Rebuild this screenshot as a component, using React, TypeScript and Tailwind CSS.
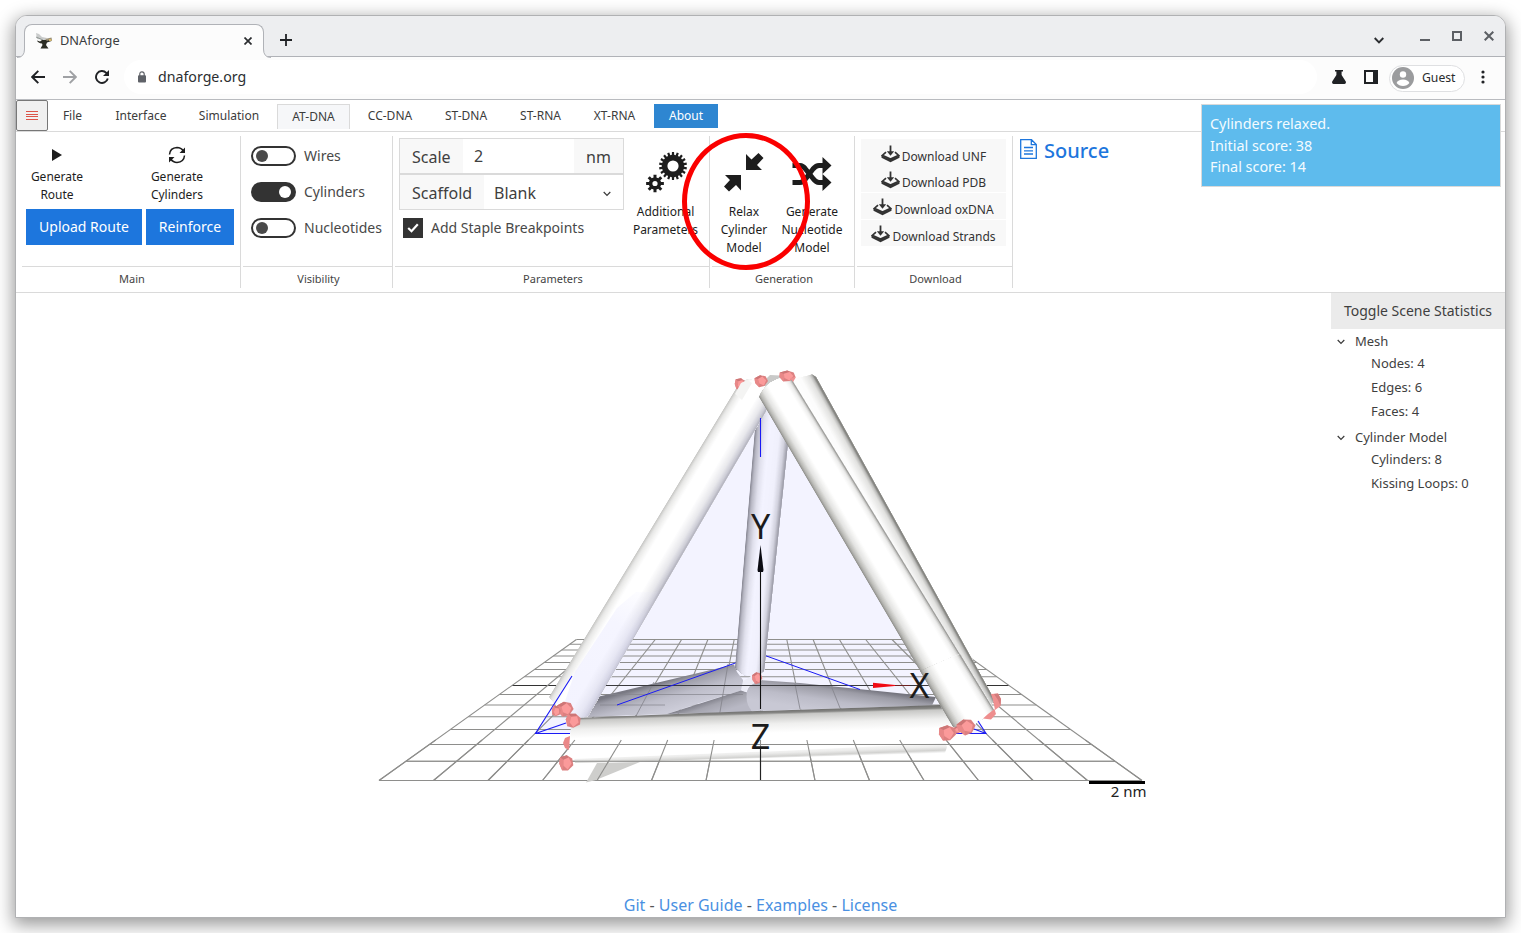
import React from "react";

type Pt = [number, number];

const CX = 760.5;
const ROWS = [639.5, 644.3, 650, 656, 662.5, 669.5, 676.7, 685.5, 694.5, 705, 716.7, 729.5, 744.5, 761.3, 780.5];
const halfWidth = (y: number) => 381.5 * ((y - 508) / 272.5);
const COLS = Array.from({ length: 15 }, (_, i) => (i - 7) / 7);

function gearPath(cx: number, cy: number, rOut: number, rIn: number, teeth: number, hole: number) {
  const pts: string[] = [];
  const step = (Math.PI * 2) / teeth;
  for (let i = 0; i < teeth; i++) {
    const a = i * step - Math.PI / 2;
    const spec: Pt[] = [
      [-0.3, rIn],
      [-0.22, rOut],
      [0.22, rOut],
      [0.3, rIn],
    ];
    spec.forEach(([o, r]) => {
      pts.push(`${(cx + r * Math.cos(a + o * step)).toFixed(2)} ${(cy + r * Math.sin(a + o * step)).toFixed(2)}`);
    });
  }
  return `M${pts.join("L")}Z M${cx + hole} ${cy}A${hole} ${hole} 0 1 0 ${cx - hole} ${cy}A${hole} ${hole} 0 1 0 ${cx + hole} ${cy}Z`;
}

type Stop = [number, number, number, number];

function ramp(stops: Stop[], t: number) {
  let i = 0;
  while (i < stops.length - 2 && t > stops[i + 1][0]) i++;
  const a = stops[i];
  const b = stops[i + 1];
  const k = Math.min(1, Math.max(0, (t - a[0]) / (b[0] - a[0])));
  const mix = (n: number) => Math.round(a[n] + (b[n] - a[n]) * k);
  return `rgb(${mix(1)},${mix(2)},${mix(3)})`;
}

/* A tapered cylinder: shading strips run between the two silhouette edges, cut to the outline. */
function Cylinder({ id, a, b, outline, stops }: { id: string; a: [Pt, Pt]; b: [Pt, Pt]; outline: string; stops: Stop[] }) {
  const N = 36;
  const at = (edge: [Pt, Pt], s: number): Pt => [edge[0][0] + (edge[1][0] - edge[0][0]) * s, edge[0][1] + (edge[1][1] - edge[0][1]) * s];
  const lerp = (p: Pt, q: Pt, t: number) => `${(p[0] + (q[0] - p[0]) * t).toFixed(2)},${(p[1] + (q[1] - p[1]) * t).toFixed(2)}`;
  const top: [Pt, Pt] = [at(a, -0.15), at(b, -0.15)];
  const bottom: [Pt, Pt] = [at(a, 1.15), at(b, 1.15)];
  return (
    <g clipPath={`url(#${id})`}>
      <clipPath id={id}>
        <path d={outline} />
      </clipPath>
      <path d={outline} fill={ramp(stops, 0)} />
      {Array.from({ length: N }, (_, i) => {
        const t = i / N;
        return (
          <polygon
            key={i}
            points={`${lerp(top[0], top[1], t)} ${lerp(top[0], top[1], 1.2)} ${lerp(bottom[0], bottom[1], 1.2)} ${lerp(bottom[0], bottom[1], t)}`}
            fill={ramp(stops, t + 0.5 / N)}
          />
        );
      })}
    </g>
  );
}

const LEFT_STOPS: Stop[] = [
  [0, 196, 196, 194],
  [0.08, 232, 232, 231],
  [0.25, 255, 255, 255],
  [0.6, 255, 255, 255],
  [0.82, 232, 232, 236],
  [0.93, 206, 206, 215],
  [1, 176, 176, 188],
];
const RIGHT_STOPS: Stop[] = [
  [0, 140, 140, 136],
  [0.06, 184, 184, 180],
  [0.18, 228, 228, 226],
  [0.36, 255, 255, 255],
  [0.8, 255, 255, 255],
  [0.92, 236, 236, 235],
  [0.97, 190, 190, 188],
  [1, 130, 130, 126],
];
const FAR_STOPS: Stop[] = [
  [0, 255, 255, 255],
  [0.6, 252, 252, 252],
  [0.85, 226, 226, 224],
  [0.93, 190, 190, 188],
  [1, 120, 120, 116],
];
const MID_STOPS: Stop[] = [
  [0, 132, 132, 144],
  [0.08, 184, 184, 196],
  [0.25, 226, 226, 238],
  [0.42, 243, 243, 255],
  [0.72, 240, 240, 252],
  [0.88, 210, 210, 222],
  [1, 152, 152, 164],
];

/* Low-poly sphere joint, drawn as an uneven polygon with one bright facet. */
function Joint({ x, y, r, ry = r, rot = 0 }: { x: number; y: number; r: number; ry?: number; rot?: number }) {
  const point = (deg: number, k: number) => {
    const a = ((deg + rot) * Math.PI) / 180;
    return `${(x + r * k * Math.cos(a)).toFixed(2)},${(y + ry * k * Math.sin(a)).toFixed(2)}`;
  };
  const outer = [point(0, 1.08), point(58, 0.98), point(105, 1.08), point(160, 0.96), point(205, 1.1), point(262, 0.98), point(312, 1.06)];
  const facet = [point(-10, 0.8), point(58, 0.86), point(120, 0.5), point(215, 0.55), point(285, 0.78)];
  return (
    <g>
      <polygon points={outer.join(" ")} fill="#dc8080" />
      <polygon points={[point(105, 1.08), point(160, 0.96), point(205, 1.1), point(215, 0.55), point(120, 0.5)].join(" ")} fill="#e88888" />
      <polygon points={[point(205, 1.1), point(262, 0.98), point(285, 0.78), point(215, 0.55)].join(" ")} fill="#cd7676" />
      <polygon points={facet.join(" ")} fill="#fb9a9a" />
    </g>
  );
}

function Scene() {
  return (
    <svg className="block h-full w-full" viewBox="16 293 1489 624" preserveAspectRatio="none">
      <defs>
        <linearGradient id="front" gradientUnits="userSpaceOnUse" x1="760" y1="710.5" x2="761.3" y2="756">
          <stop offset="0" stopColor="#6d6d6b" />
          <stop offset="0.06" stopColor="#868684" />
          <stop offset="0.1" stopColor="#c8c8c6" />
          <stop offset="0.3" stopColor="#efefee" />
          <stop offset="0.5" stopColor="#ffffff" />
          <stop offset="1" stopColor="#ffffff" />
        </linearGradient>
        <linearGradient id="under" gradientUnits="userSpaceOnUse" x1="760" y1="748" x2="760.4" y2="759">
          <stop offset="0" stopColor="#ffffff" />
          <stop offset="0.5" stopColor="#ececeb" />
          <stop offset="0.8" stopColor="#d2d2d0" />
          <stop offset="1" stopColor="#f4f4f4" />
        </linearGradient>
        <linearGradient id="baseLeft" gradientUnits="userSpaceOnUse" x1="665" y1="681" x2="674" y2="713">
          <stop offset="0" stopColor="#797983" />
          <stop offset="0.14" stopColor="#9a9aa5" />
          <stop offset="0.5" stopColor="#bdbdc9" />
          <stop offset="1" stopColor="#cfcfdb" />
        </linearGradient>
        <linearGradient id="baseRight" gradientUnits="userSpaceOnUse" x1="850" y1="687" x2="846" y2="714">
          <stop offset="0" stopColor="#767680" />
          <stop offset="0.2" stopColor="#9c9ca6" />
          <stop offset="0.6" stopColor="#bcbcc8" />
          <stop offset="1" stopColor="#c8c8d4" />
        </linearGradient>
        <linearGradient id="baseInner" gradientUnits="userSpaceOnUse" x1="705" y1="701" x2="710" y2="716">
          <stop offset="0" stopColor="#7e7e88" />
          <stop offset="0.4" stopColor="#a4a4ae" />
          <stop offset="1" stopColor="#b8b8c4" />
        </linearGradient>
        <linearGradient id="tint" gradientUnits="userSpaceOnUse" x1="650" y1="580" x2="585" y2="700">
          <stop offset="0" stopColor="#e6e6ff" stopOpacity="0" />
          <stop offset="0.4" stopColor="#e6e6ff" stopOpacity="0.4" />
          <stop offset="1" stopColor="#e6e6ff" stopOpacity="0.45" />
        </linearGradient>
      </defs>

      <polygon points="760,386 535,733.5 986,733.5" fill="#f3f3ff" />

      {/* ground grid */}
      <g stroke="#8e8e8c" strokeWidth="1.1">
        {ROWS.map((y) => (
          <line key={y} x1={CX - halfWidth(y)} x2={CX + halfWidth(y)} y1={y} y2={y} stroke={y === 685.5 ? "#333333" : undefined} />
        ))}
        {COLS.map((c) => (
          <line key={c} x1={CX + c * halfWidth(639.5)} y1={639.5} x2={CX + c * halfWidth(780.5)} y2={780.5} />
        ))}
      </g>

      {/* base cylinders */}
      <polygon points="584,700 597,697 734,664.5 737,672 743,680 743,690 700,703 667,714 584,717" fill="url(#baseLeft)" />
      <polygon points="667,714 741,690.5 749,693 752,712" fill="url(#baseInner)" />
      <path d="M760 680 L800 683 L936 697 L932 705.5 L752 711 Q745 704 747 691 Q749 684 760 680Z" fill="url(#baseRight)" />
      <polygon points="743,681 757,673 765,679 757,682 749,686 746,692 741,690" fill="#ececf6" />
      <g stroke="#84848c" strokeWidth="1">
        <line x1="606" x2="743" y1="694.5" y2="694.5" opacity="0.7" />
        <line x1="600" x2="665" y1="705" y2="705" opacity="0.7" />
        <line x1="654" x2="636" y1="682" y2="716" opacity="0.8" />
        <line x1="728" x2="720" y1="664" y2="712" opacity="0.8" />
        <line x1="795" x2="800" y1="684" y2="709" opacity="0.8" />
        <line x1="832" x2="840" y1="688" y2="708" opacity="0.8" />
        <line x1="600" x2="935" y1="685.5" y2="685.5" stroke="#3a3a3e" />
      </g>

      {/* mesh edges */}
      <g stroke="#1a1af5" strokeWidth="1" fill="none">
        <line x1="617" y1="705" x2="741" y2="661" />
        <line x1="765" y1="655.5" x2="860" y2="689.5" />
      </g>

      {/* far cylinders */}
      <polygon points="761,384 770,375 790,376 796,386 780,394" fill="#c9c9c8" />
      <Cylinder
        id="far"
        a={[[785, 390], [965, 715]]}
        b={[[815, 377], [993.5, 699]]}
        outline="M791 380 L797 378 L807 376 L812 374.5 L816 377 L994 699 L990 708 L975 690Z"
        stops={FAR_STOPS}
      />
      <Cylinder
        id="mid"
        a={[[755, 428], [735, 668]]}
        b={[[787.5, 447], [764, 671]]}
        outline="M756 402 L768 396 L788 440 L787.5 447 L764 671 L756 677 L744 675 L735 668 L755 428Z"
        stops={MID_STOPS}
      />
      <Joint x={757} y={678} r={5} ry={6} />

      {/* left cylinder */}
      <Cylinder
        id="left"
        a={[[740, 382], [549, 697]]}
        b={[[766, 411], [588, 716]]}
        outline="M740 382 L749 379 L760 383 L768 396 L766 411 L588 716 L576 719 L560 709 L549 697Z"
        stops={LEFT_STOPS}
      />
      <polygon points="660,592 636,592 617,608 575,672 562,710 578,719 588,716" fill="url(#tint)" />

      <Joint x={740} y={384} r={5.5} ry={6} rot={20} />
      <polygon points="741,383 747,380 752,383 742,400 735,394" fill="#f4f4f3" />
      <Joint x={761} y={381} r={6.5} ry={6} />
      <Cylinder
        id="near"
        a={[[759, 397], [953, 727]]}
        b={[[792, 380], [994, 710]]}
        outline="M759 397 Q763 388 770 383 L778 379 L786 378 L792 380 L994 710 L987 716 L973 725 L953 727Z"
        stops={RIGHT_STOPS}
      />
      <Joint x={787} y={376} r={8} ry={5.5} rot={10} />
      <polygon points="790,378 796,377 793,382" fill="#ee9090" />

      {/* front cylinder */}
      <polygon points="597,763 640,762 596,780 586,782.5" fill="#cececc" />
      <polygon points="573,750 945,742 947,747 945,752.7 780,757.5 575,763" fill="url(#under)" />
      <path d="M578 718 L700 713 L940 705 L954 728 L945 743 L780 751 L574 759 L570 745 L571 724Z" fill="url(#front)" />
      <Cylinder
        id="nearFoot"
        a={[[759, 397], [953, 727]]}
        b={[[792, 380], [994, 710]]}
        outline="M920 671 L953 727 L973 725 L987 716 L994 710 L960 654Z"
        stops={RIGHT_STOPS}
      />

      {/* grid lines in front of the cylinders */}
      <g stroke="#8e8e8c" strokeWidth="1.1">
        <line x1="430" x2="1092" y1="744.5" y2="744.5" />
        <line x1="407" x2="1115" y1="761.3" y2="761.3" />
        {COLS.map((c) => (
          <line key={c} x1={CX + c * halfWidth(740)} y1={740} x2={CX + c * halfWidth(780.5)} y2={780.5} />
        ))}
      </g>

      <g stroke="#1a1af5" strokeWidth="1.1" fill="none">
        <path d="M572 676 L535.5 733.5 L570 733.5 M535.5 733.5 L566 723" />
        <path d="M956 733.5 L986 733.5 L978 721 M974 729 L986 733.5" />
        <line x1="760.5" x2="760.5" y1="418" y2="457" />
      </g>

      <Joint x={565} y={709} r={8} ry={7.5} />
      <Joint x={556} y={711} r={4.5} ry={5.5} rot={40} />
      <Joint x={573} y={720.5} r={7.5} ry={7.5} rot={30} />
      <path d="M570 736 L565 738 L563 743 L565 748 L569 750Z" fill="#ea8888" />
      <Joint x={566} y={763} r={7} ry={8} rot={15} />
      <path d="M991 694 L998 693.5 L1001 699 L1000.5 706 L995 710 L993 700Z" fill="#f09090" />
      <path d="M994 694 L998 693.5 L1001 699 L1000.5 706 L998 700Z" fill="#d27c7c" />
      <path d="M994.5 709 L996 714 L991 719.5 L983 718.5 L988 714Z" fill="#ee8e8e" />
      <Joint x={957} y={730} r={4} ry={3.5} />
      <Joint x={947} y={733} r={8.5} ry={8} rot={10} />
      <Joint x={966} y={727} r={9} ry={8} rot={-10} />

      {/* axes */}
      <line x1="760.5" x2="760.5" y1="570" y2="709" stroke="#111" strokeWidth="1.1" />
      <line x1="760.5" x2="760.5" y1="749" y2="780" stroke="#222" strokeWidth="1.1" />
      <polygon points="760.5,545 763.5,570 763,572 758,572 757.5,570" fill="#0b0b12" />
      <polygon points="900,685.5 873,682.8 873,688" fill="#f00a14" />
      <line x1="895" x2="910" y1="685.5" y2="685.5" stroke="#6b2222" strokeWidth="1" />
      <g fontFamily="Noto Sans, sans-serif" fontSize="34" fill="#1c1c1c" textAnchor="middle">
        <text x="760.5" y="539">Y</text>
        <text x="919.5" y="698">X</text>
        <text x="760.5" y="749">Z</text>
      </g>
      <rect x="1089" y="781" width="56" height="3" fill="#000" />
      <text x="1146.5" y="797" textAnchor="end" fontFamily="Noto Sans, sans-serif" fontSize="15" fill="#222">
        2 nm
      </text>
    </svg>
  );
}

function Group({ title, className, children }: { title: string; className: string; children?: React.ReactNode }) {
  return (
    <div className={`flex h-[152px] shrink-0 flex-col border-r border-[#dadada] ${className}`}>
      <div className="h-[130px]">{children}</div>
      <div className="h-[22px] border-t border-[#dadada] pl-[2px] pt-[4px] text-center text-[11px] leading-[16px] text-[#444]">{title}</div>
    </div>
  );
}

function ToolButton({ icon, lines, className }: { icon: React.ReactNode; lines: string[]; className: string }) {
  return (
    <button className={`flex flex-col items-center text-[12px] leading-[18px] text-[#1d1d1d] ${className}`}>
      {icon}
      {lines.map((l) => (
        <span key={l} className="whitespace-nowrap">{l}</span>
      ))}
    </button>
  );
}

function Switch({ on, label }: { on?: boolean; label: string }) {
  return (
    <label className="flex h-9 items-center gap-2">
      <span className={on ? "flex h-5 w-[45px] items-center justify-end rounded-full bg-[#333] px-[5px]" : "flex h-5 w-[45px] items-center rounded-full border-2 border-[#333] bg-white px-[3px]"}>
        <span className={on ? "h-3 w-3 rounded-full bg-white" : "h-3 w-3 rounded-full bg-[#4a4a4a]"} />
      </span>
      <span className="pb-[2px] text-[14px] text-[#484848]">{label}</span>
    </label>
  );
}

function DownloadIcon() {
  return (
    <svg width="19" height="18" viewBox="0 0 19 18" fill="none" stroke="#333">
      <path d="M9.5 0.5V9" strokeWidth="1.8" />
      <path d="M5.8 6.2L9.5 10.8L13.2 6.2Z" fill="#333" stroke="none" />
      <path d="M5 7.2L1.3 10.4L9.5 14L17.7 10.4L14 7.2" strokeWidth="1.7" />
      <path d="M0.5 10.5L9.5 14.3L18.5 10.5V12.8L9.5 17.2L0.5 12.8Z" fill="#333" stroke="none" />
    </svg>
  );
}

function Chevron({ className }: { className: string }) {
  return (
    <svg className={className} width="8" height="6" viewBox="0 0 8 6" fill="none" stroke="#3a3a3a" strokeWidth="1.2">
      <path d="M0.7 1L4 4.5L7.3 1" />
    </svg>
  );
}

const TABS: [string, string][] = [
  ["File", "w-[49px]"],
  ["Interface", "w-[80px]"],
  ["Simulation", "w-[88px]"],
  ["AT-DNA", "w-[73px] h-[25px] border border-b-0 border-[#dadada] bg-[#f6f7f9]"],
  ["CC-DNA", "w-[72px]"],
  ["ST-DNA", "w-[72px]"],
  ["ST-RNA", "w-[69px]"],
  ["XT-RNA", "w-[71px]"],
  ["About", "w-[64px] bg-[#2e86d1] text-white"],
];

const DOWNLOADS: [string, string][] = [
  ["Download UNF", "h-[27px] pt-px"],
  ["Download PDB", "h-[26px]"],
  ["Download oxDNA", "mt-px h-[26px]"],
  ["Download Strands", "mt-px h-[26px]"],
];

const GEARS = gearPath(28, 14, 14, 11.2, 18, 5.6) + gearPath(10, 31.5, 9, 6.2, 8, 2.6);

export default function App() {
  return (
    <div className="h-[933px] w-[1521px] overflow-hidden bg-white pl-[15px] pt-[15px] font-['Noto_Sans',sans-serif]">
      <div className="relative flex h-[903px] w-[1491px] flex-col overflow-visible rounded-t-[12px] border border-[#b0b1b3] bg-white shadow-[0_5px_17px_2px_rgba(0,0,0,0.4)]">
        {/* tab strip */}
        <div className="flex h-[41px] shrink-0 items-start rounded-t-[11px] border-b border-[#b0b2b7] bg-[#edeef0]">
          <div className="relative ml-2 mt-2 flex h-[33px] w-[240px] items-center rounded-t-[8px] border border-b-0 border-[#b0b2b7] bg-[#fcfcfc]">
            <svg className="absolute -left-[8px] bottom-[-1px]" width="8" height="9" viewBox="0 0 8 9">
              <path d="M8 0V9H0V8.5Q7.5 8.5 7.5 0Z" fill="#fcfcfc" />
              <path d="M7.5 0Q7.5 8.5 0 8.5" fill="none" stroke="#b0b2b7" />
            </svg>
            <svg className="absolute -right-[8px] bottom-[-1px]" width="8" height="9" viewBox="0 0 8 9">
              <path d="M0 0V9H8V8.5Q0.5 8.5 0.5 0Z" fill="#fcfcfc" />
              <path d="M0.5 0Q0.5 8.5 8 8.5" fill="none" stroke="#b0b2b7" />
            </svg>
            <svg className="ml-[11px]" width="16" height="16" viewBox="0 0 16 16">
              <path d="M0 0L3 1L6 4L11 5L9 7L1 6Z" fill="#c9cbcb" />
              <path d="M0 4L7 7" stroke="#8e9592" strokeWidth="1" />
              <path d="M1 7.5L4 8.5L6 7H11L15.5 5.5V8L11 9.5L10 12L12.5 15.5H4.5L6.5 12L6 10.5Q2 10 1 7.5Z" fill="#2c2d25" />
              <path d="M9 6L15.5 4.5V6.5L11 8Z" fill="#9a8f76" />
              <path d="M13 6h2.5v2H13z" fill="#d5b66b" />
            </svg>
            <span className="ml-[8px] text-[12.8px] text-[#3a3c40]">DNAforge</span>
            <svg className="mb-px ml-auto mr-[11px]" width="8" height="8" viewBox="0 0 8 8" stroke="#2b2d30" strokeWidth="1.7">
              <path d="M0.5 0.5L7.5 7.5M7.5 0.5L0.5 7.5" />
            </svg>
          </div>
          <svg className="ml-4 mt-[18px]" width="12" height="12" viewBox="0 0 12 12" stroke="#202225" strokeWidth="1.8">
            <path d="M6 0V12M0 6H12" />
          </svg>
          <div className="ml-auto flex">
            <svg className="mr-[36px] mt-[21px]" width="10" height="7" viewBox="0 0 10 7" fill="none" stroke="#2b2d30" strokeWidth="1.9">
              <path d="M0.7 1L5 5.3L9.3 1" />
            </svg>
            <svg className="mr-[22px] mt-[23px]" width="10" height="2"><rect width="10" height="2" fill="#5c5f64" /></svg>
            <svg className="mr-[22px] mt-[15px]" width="10" height="10"><rect x="1" y="1" width="8" height="8" fill="none" stroke="#5c5f64" strokeWidth="2" /></svg>
            <svg className="mr-[11px] mt-[15px]" width="10" height="10" viewBox="0 0 10 10" stroke="#5c5f64" strokeWidth="2">
              <path d="M0.7 0.7L9.3 9.3M9.3 0.7L0.7 9.3" />
            </svg>
          </div>
        </div>

        {/* address bar */}
        <div className="flex h-[43px] shrink-0 items-center border-b border-[#b9bbbf] bg-[#fcfcfc] pb-[2px]">
          <svg className="ml-[15px]" width="14" height="14" viewBox="0 0 14 14" fill="none" stroke="#202225" strokeWidth="1.9">
            <path d="M14 7H1.5M7.3 0.8L1.2 7L7.3 13.2" />
          </svg>
          <svg className="ml-[18px]" width="14" height="14" viewBox="0 0 14 14" fill="none" stroke="#9fa1a4" strokeWidth="1.9">
            <path d="M0 7H12.5M6.7 0.8L12.8 7L6.7 13.2" />
          </svg>
          <svg className="ml-[18px]" width="14" height="14" viewBox="0 0 14 14" fill="none" stroke="#202225" strokeWidth="1.9">
            <path d="M12.8 8.6A6 6 0 1 1 11.3 2.8L12.4 4" />
            <path d="M14 0V6H8Z" fill="#202225" stroke="none" />
          </svg>
          <div className="ml-[15px] flex h-[34px] w-[1193px] items-center rounded-full bg-white">
            <svg className="ml-[14px]" width="8" height="12" viewBox="0 0 8 12">
              <path d="M1.8 5V3Q1.8 0.8 4 0.8Q6.2 0.8 6.2 3V5" fill="none" stroke="#5f6268" strokeWidth="1.2" />
              <rect y="4.3" width="8" height="7.2" rx="1" fill="#5f6268" />
            </svg>
            <span className="ml-[12px] text-[14.2px] text-[#2c2e31]">dnaforge.org</span>
          </div>
          <svg className="ml-[15px]" width="14" height="14" viewBox="0 0 14 14" fill="#202225">
            <path d="M3 0H11V1.5H9.6V5L13.8 11.5Q14.4 14 12.5 14H1.5Q-0.4 14 0.2 11.5L4.4 5V1.5H3Z" />
          </svg>
          <svg className="ml-[18px]" width="14" height="14" viewBox="0 0 14 14">
            <path d="M0 0H14V14H0ZM2 2V12H9V2Z" fill="#202225" fillRule="evenodd" />
          </svg>
          <div className="ml-[11px] mt-[2px] flex h-[27px] w-[76px] items-center rounded-full border border-[#dfe0e2] bg-white">
            <svg className="ml-[2px]" width="22" height="22" viewBox="0 0 22 22">
              <circle cx="11" cy="11" r="11" fill="#9b9c9e" />
              <circle cx="11" cy="7.5" r="3.2" fill="#fff" />
              <path d="M4.6 16Q6 12.4 11 12.4Q16 12.4 17.4 16Q15 19 11 19Q7 19 4.6 16Z" fill="#fff" />
            </svg>
            <span className="ml-[8px] text-[12.2px] text-[#2a2c2e]">Guest</span>
          </div>
          <svg className="ml-[16px]" width="4" height="14" viewBox="0 0 4 14" fill="#202225">
            <circle cx="2" cy="2" r="1.6" />
            <circle cx="2" cy="7" r="1.6" />
            <circle cx="2" cy="12" r="1.6" />
          </svg>
        </div>

        {/* menu */}
        <div className="flex h-[32px] shrink-0 items-start border-b border-[#dadada]">
          <button className="flex h-[31px] w-8 shrink-0 items-center justify-center rounded-[2px] border border-[#777] bg-[#f0f0f0]">
            <svg width="12" height="9" viewBox="0 0 12 9" fill="#dc5348">
              <path d="M0 0H12V1H0ZM0 3H12V4H0ZM0 5H12V6H0ZM0 8H12V9H0Z" />
            </svg>
          </button>
          <div className="mt-1 flex gap-1">
            {TABS.map(([t, c]) => (
              <div key={t} className={`h-6 text-center text-[12px] leading-[24px] ${t === "About" ? "" : "text-[#3c3c3c]"} ${c}`}>{t}</div>
            ))}
          </div>
        </div>

        {/* ribbon */}
        <div className="flex h-[161px] shrink-0 border-b border-[#dadada] pl-[6px] pt-1">
          <Group title="Main" className="w-[219px]">
            <div className="flex h-[73px]">
              <ToolButton
                className="ml-[5px] w-[60px] pt-[10px]"
                lines={["Generate", "Route"]}
                icon={<svg className="mb-[4px]" width="18" height="18" viewBox="0 0 18 18"><path d="M4 3L14 9L4 15Z" fill="#1d1d1d" /></svg>}
              />
              <ToolButton
                className="ml-[60px] w-[60px] pt-[10px]"
                lines={["Generate", "Cylinders"]}
                icon={
                  <svg className="mb-[4px]" width="18" height="18" viewBox="0 0 18 18" fill="none" stroke="#1d1d1d" strokeWidth="1.5">
                    <path d="M1.5 8.5Q2 2 9 1.6Q13 1.6 15.3 5M16.5 9.5Q16 16 9 16.4Q5 16.4 2.7 13" />
                    <path d="M17 1.5V7H11.5ZM1 16.5V11H6.5Z" fill="#1d1d1d" stroke="none" />
                  </svg>
                }
              />
            </div>
            <div className="flex gap-1 pl-1 text-[14px] text-white">
              <button className="h-9 w-[116px] bg-[#1d76dd] pb-[2px]">Upload Route</button>
              <button className="h-9 w-[88px] bg-[#1d76dd] pb-[2px]">Reinforce</button>
            </div>
          </Group>
          <Group title="Visibility" className="ml-[2px] w-[150px]">
            <div className="flex flex-col pl-[8px] pt-[2px]">
              <Switch label="Wires" />
              <Switch on label="Cylinders" />
              <Switch label="Nucleotides" />
            </div>
          </Group>
          <Group title="Parameters" className="ml-[2px] w-[315px]">
            <div className="flex">
              <div className="ml-[4px] mt-[2px] w-[225px] text-[16px] text-[#404040]">
                <div className="flex h-9 border border-[#dadada] leading-[36px]">
                  <div className="w-[63px] bg-[#f8f8f8] pl-3">Scale</div>
                  <div className="flex-1 pl-[11px] leading-[34px]">2</div>
                  <div className="w-[49px] bg-[#f8f8f8] pl-[12px]">nm</div>
                </div>
                <div className="flex h-9 items-center border border-[#dadada] leading-[36px]">
                  <div className="h-full w-[84px] bg-[#f8f8f8] pl-3">Scaffold</div>
                  <div className="flex-1 pl-[10px] pt-px">Blank</div>
                  <Chevron className="mr-[12px] mt-1" />
                </div>
                <div className="mt-2 flex h-5 items-center">
                  <span className="ml-1 flex h-5 w-5 items-center justify-center bg-[#333]">
                    <svg width="12" height="10" viewBox="0 0 12 10" fill="none" stroke="#fff" strokeWidth="2.2"><path d="M1.2 5L4.5 8.2L10.8 1.3" /></svg>
                  </span>
                  <span className="ml-2 pb-[2px] text-[14px] text-[#484848]">Add Staple Breakpoints</span>
                </div>
              </div>
              <ToolButton
                className="ml-[6px] w-[71px] pt-[16px]"
                lines={["Additional", "Parameters"]}
                icon={<svg className="mb-[10px]" width="42" height="41" viewBox="0 0 42 41"><path d={GEARS} fill="#1d1d1d" fillRule="evenodd" /></svg>}
              />
            </div>
          </Group>
          <Group title="Generation" className="ml-[2px] w-[143px]">
            <div className="flex">
              <ToolButton
                className="ml-[-2px] w-[68px] pt-[16px]"
                lines={["Relax", "Cylinder", "Model"]}
                icon={
                  <svg className="mb-[10px]" width="40" height="41" viewBox="0 0 40 41" fill="#1d1d1d">
                    <path d="M22 2V18H38L33 13L39.5 6L34.5 1L27.5 7.5Z" />
                    <path d="M17 38.5V23H1L6 28L0 34.5L5 39.5L12 33Z" />
                  </svg>
                }
              />
              <ToolButton
                className="w-[68px] pt-[16px]"
                lines={["Generate", "Nucleotide", "Model"]}
                icon={
                  <svg className="mb-[10px]" width="40" height="41" viewBox="0 0 40 41" fill="none" stroke="#1d1d1d" strokeWidth="5">
                    <path d="M0.5 13.5H8Q11 13.5 13.5 17L21 26.5Q24 30.5 27 30.5H31M0.5 30.5H8Q11 30.5 13.5 27L21 17Q24 13.5 27 13.5H31" />
                    <path d="M30.5 5L39.5 13.5L30.5 22ZM30.5 22L39.5 30.5L30.5 39Z" fill="#1d1d1d" stroke="none" />
                  </svg>
                }
              />
            </div>
          </Group>
          <Group title="Download" className="ml-[2px] w-[156px]">
            <div className="ml-[4px] mt-[2px] flex w-[145px] flex-col pt-px text-[12px] text-[#333]">
              {DOWNLOADS.map(([d, c]) => (
                <button key={d} className={`flex items-center justify-center gap-[2px] bg-[#f8f8f8] ${c}`}>
                  <span className="mt-px"><DownloadIcon /></span>
                  <span className="pt-[8px]">{d}</span>
                </button>
              ))}
            </div>
          </Group>
          <div className="ml-[7px] mt-[2px] flex h-[26px] items-center text-[#1d76dd]">
            <svg className="mb-1" width="17" height="20" viewBox="0 0 17 20" fill="none" stroke="#1d76dd" strokeWidth="1.3">
              <path d="M0.7 0.7H11.5L16.3 5.5V19.3H0.7ZM11.3 0.7V5.7H16.3M4 8.5H13M4 11.8H13M4 15H13" />
            </svg>
            <span className="ml-[7px] text-[20px] font-medium">Source</span>
          </div>
        </div>

        {/* canvas */}
        <div className="relative min-h-0 flex-1">
          <Scene />
          <div className="absolute right-0 top-0 w-[174px] text-[13px] text-[#3f3f3f]">
            <button className="h-9 w-full bg-[#ebebeb] pb-[2px] text-[14px]">Toggle Scene Statistics</button>
            <div className="flex h-[25px] items-center pl-[6px]"><Chevron className="mr-[10px]" />Mesh</div>
            <div className="pl-10 leading-6">
              <div className="-mt-[3px]">Nodes: 4</div>
              <div>Edges: 6</div>
              <div>Faces: 4</div>
            </div>
            <div className="mt-[2px] flex h-[25px] items-center pl-[6px]"><Chevron className="mr-[10px]" />Cylinder Model</div>
            <div className="pl-10 leading-6">
              <div className="-mt-[3px]">Cylinders: 8</div>
              <div>Kissing Loops: 0</div>
            </div>
          </div>
          <div className="absolute bottom-0 left-0 w-full text-center text-[16px] leading-[24px] text-[#555]">
            <a className="text-[#4a90e2]">Git</a> - <a className="text-[#4a90e2]">User Guide</a> - <a className="text-[#4a90e2]">Examples</a> - <a className="text-[#4a90e2]">License</a>
          </div>
        </div>

        {/* notification */}
        <div className="absolute right-[4px] top-[88px] h-[83px] w-[300px] border border-[#d9d9d9] bg-[#5ebbed] pl-2 pt-2 text-[14.4px] leading-[21.5px] text-[#f4fbff]">
          <div>Cylinders relaxed.</div>
          <div>Initial score: 38</div>
          <div>Final score: 14</div>
        </div>

        {/* highlight ring */}
        <div className="absolute left-[666px] top-[117px] h-[137px] w-[128px] rounded-[50%] border-[5px] border-[#fa0000]" />
      </div>
    </div>
  );
}
